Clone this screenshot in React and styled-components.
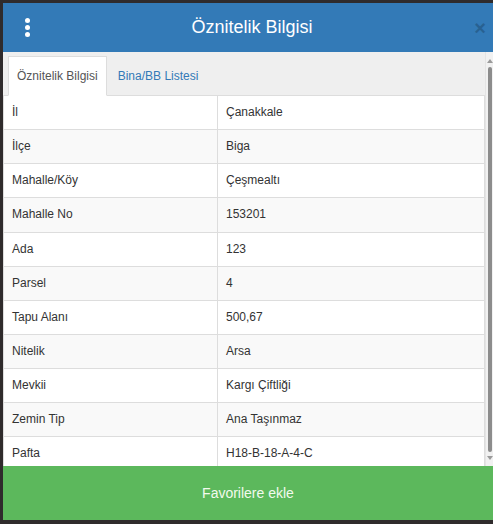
import React from "react";
import styled, { createGlobalStyle } from "styled-components";

const rows = [
  ["İl", "Çanakkale"],
  ["İlçe", "Biga"],
  ["Mahalle/Köy", "Çeşmealtı"],
  ["Mahalle No", "153201"],
  ["Ada", "123"],
  ["Parsel", "4"],
  ["Tapu Alanı", "500,67"],
  ["Nitelik", "Arsa"],
  ["Mevkii", "Kargı Çiftliği"],
  ["Zemin Tip", "Ana Taşınmaz"],
  ["Pafta", "H18-B-18-A-4-C"],
];

const GlobalStyle = createGlobalStyle`
  html, body {
    margin: 0;
    padding: 0;
    background: #2f2b2c;
    overflow: hidden;
  }
  body {
    font-family: "Liberation Sans", Arial, sans-serif;
    color: #333;
  }
`;

const Modal = styled.div`
  margin: 3px 0 0 3px;
  width: 490px;
  height: 517px;
  display: flex;
  flex-direction: column;
  background: #fff;
`;

const Header = styled.div`
  height: 49px;
  flex: none;
  background: #337ab7;
  display: grid;
  grid-template-columns: 48px 1fr 40px;
  align-items: center;
`;

const MenuButton = styled.div`
  justify-self: center;
  display: flex;
  flex-direction: column;
  gap: 2px;
  span {
    width: 5px;
    height: 5px;
    border-radius: 50%;
    background: #fff;
  }
`;

const Title = styled.h4`
  margin: 0;
  text-align: center;
  color: #fff;
  font-size: 18px;
  font-weight: normal;
`;

const Close = styled.span`
  justify-self: end;
  margin-right: 7px;
  font-size: 20px;
  font-weight: bold;
  line-height: 1;
  color: #000;
  opacity: 0.2;
`;

const Body = styled.div`
  flex: 1;
  min-height: 0;
  display: flex;
`;

const Content = styled.div`
  flex: 1;
  overflow: hidden;
`;

/* slim scroll rail drawn next to the content */
const Rail = styled.div`
  flex: none;
  width: 8px;
  display: flex;
  flex-direction: column;
  align-items: center;
  background: #f1f1f1;
  border-left: 1px solid #e4e4e4;
  box-sizing: border-box;
`;

const Arrow = styled.div`
  flex: none;
  margin: ${(p) => (p.$down ? "4px 0 6px" : "7px 0 4px")};
  width: 0;
  height: 0;
  border-left: 3px solid transparent;
  border-right: 3px solid transparent;
  ${(p) =>
    p.$down ? "border-top: 4px solid #9a9a9a;" : "border-bottom: 4px solid #9a9a9a;"}
`;

const Thumb = styled.div`
  flex: 1;
  width: 4px;
  margin-left: 1px;
  border-radius: 2px;
  background: #8c8c8c;
`;

const Tabs = styled.ul`
  list-style: none;
  margin: 0;
  padding: 4px 0 0 5px;
  display: flex;
  background: #efefef;
  border-bottom: 1px solid #ddd;
`;

const Tab = styled.li`
  margin: 0 2px -1px 0;
  padding: 11px 8px 10px 8px;
  font-size: 12px;
  line-height: 17px;
  border: 1px solid ${(p) => (p.$active ? "#ddd" : "transparent")};
  border-bottom-color: ${(p) => (p.$active ? "#fff" : "transparent")};
  background: ${(p) => (p.$active ? "#fff" : "transparent")};
  color: ${(p) => (p.$active ? "#555" : "#337ab7")};
`;

const Table = styled.table`
  width: 100%;
  border-collapse: collapse;
  font-size: 12px;
  line-height: 1.42857;
  tr:nth-child(even) {
    background: #f9f9f9;
  }
  td {
    padding: 8px;
    border: 1px solid #ddd;
    border-top: none;
  }
  td:first-child {
    width: 197px;
  }
`;

const Footer = styled.button`
  flex: none;
  height: 54px;
  border: none;
  background: #5cb85c;
  color: #f2faee;
  font-family: inherit;
  font-size: 14px;
`;

export default function App() {
  return (
    <>
      <GlobalStyle />
      <Modal>
        <Header>
          <MenuButton>
            <span />
            <span />
            <span />
          </MenuButton>
          <Title>Öznitelik Bilgisi</Title>
          <Close>×</Close>
        </Header>
        <Body>
          <Content>
            <Tabs>
              <Tab $active>Öznitelik Bilgisi</Tab>
              <Tab>Bina/BB Listesi</Tab>
            </Tabs>
            <Table>
              <tbody>
                {rows.map(([k, v]) => (
                  <tr key={k}>
                    <td>{k}</td>
                    <td>{v}</td>
                  </tr>
                ))}
              </tbody>
            </Table>
          </Content>
          <Rail>
            <Arrow />
            <Thumb />
            <Arrow $down />
          </Rail>
        </Body>
        <Footer>Favorilere ekle</Footer>
      </Modal>
    </>
  );
}
